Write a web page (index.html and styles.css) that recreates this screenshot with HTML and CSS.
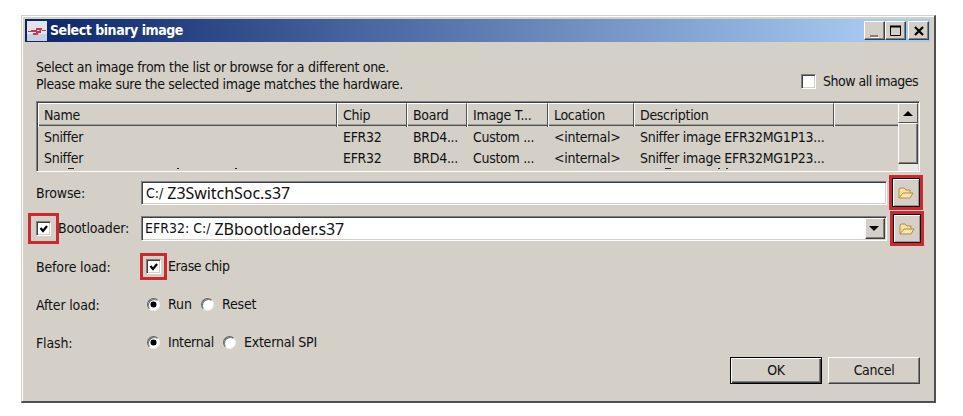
FILE: index.html
```
<!DOCTYPE html>
<html lang="en">
<head>
<meta charset="utf-8">
<title>Select binary image</title>
<link rel="stylesheet" href="styles.css">
</head>
<body>
<main class="window">
  <header class="titlebar">
    <svg class="app-icon" width="20" height="20" viewBox="0 0 20 20"><path d="M0 0h20v20H0z" fill="#e2e3ed"/><path d="M0 13h20v7H0z" fill="#c9cfe3"/><path d="M1 10.500h4M15 9.500h4" fill="none" stroke="#c23b4b"/><path d="M4 10h6M6 13h4l1-2M9 11h5M9 8h5l-1 2" fill="none" stroke="#c23b4b" stroke-width="1.800"/></svg>
    <h1>Select binary image</h1>
    <div class="controls">
      <button class="control"><svg width="20" height="18"><path d="M5 14h8" stroke="#808080" stroke-width="2"/><path d="M6 15.500h8" stroke="#fff"/></svg></button>
      <button class="control"><svg width="20" height="18"><path d="M4.500 4.500h10v9h-10z" fill="none" stroke="#000"/><path d="M4 4.500h11" stroke="#000" stroke-width="2"/></svg></button>
      <button class="control close"><svg width="20" height="18"><path d="M6 5l8 8M14 5l-8 8" stroke="#000" stroke-width="2.200"/></svg></button>
    </div>
  </header>
  <section class="intro">
    <p><span class="line1">Select an image from the list or browse for a different one.</span><br>Please make sure the selected image matches the hardware.</p>
    <label class="show-all"><i class="box"></i><span>Show all images</span></label>
  </section>
  <section class="table">
    <div class="grid">
      <div class="row head"><span>Name</span><span>Chip</span><span>Board</span><span>Image T...</span><span>Location</span><span>Description</span><span></span></div>
      <div class="row"><span>Sniffer</span><span>EFR32</span><span>BRD4...</span><span>Custom ...</span><span>&lt;internal&gt;</span><span>Sniffer image EFR32MG1P13...</span><span></span></div>
      <div class="row"><span>Sniffer</span><span>EFR32</span><span>BRD4...</span><span>Custom ...</span><span>&lt;internal&gt;</span><span>Sniffer image EFR32MG1P23...</span><span></span></div>
      <svg class="next-row" width="860" height="2"><path d="M30 .5h6M139 .5h2M197 .5h2M627 .5h6M680 .5h2M688 .5h2" stroke="#222"/></svg>
    </div>
    <div class="scroll"><div class="scroll-up"><svg width="18" height="18"><path d="M4 12h10L9 7z"/></svg></div><div class="thumb"></div></div>
  </section>
  <section class="form">
    <div class="line browse"><span class="label">Browse:</span><div class="field"><span class="prefix">C:/</span><span class="path">Z3SwitchSoc.s37</span></div><button class="folder"><svg width="18" height="16" viewBox="0 0 18 16"><path d="M2 13V4l1-1h4l2 2h4v3" fill="#f8dfa5" stroke="#b18a42"/><path d="M2 13l4-5h10l-3 5z" fill="#ffe5aa" stroke="#b18a42"/></svg></button></div>
    <div class="line boot"><span class="label"><i class="box checked"><svg width="11" height="11"><path d="M1.500 3l2.500 3 4-5" fill="none" stroke="#000" stroke-width="2.200"/></svg></i><span>Bootloader:</span></span><div class="field combo"><span class="prefix">EFR32: C:/</span><span class="path">ZBbootloader.s37</span><div class="drop"><svg width="16" height="18"><path d="M3 7h10l-5 5z"/></svg></div></div><button class="folder"><svg width="18" height="16" viewBox="0 0 18 16"><path d="M2 13V4l1-1h4l2 2h4v3" fill="#f8dfa5" stroke="#b18a42"/><path d="M2 13l4-5h10l-3 5z" fill="#ffe5aa" stroke="#b18a42"/></svg></button></div>
    <div class="line before"><span class="label">Before load:</span><i class="box checked"><svg width="11" height="11"><path d="M1.500 3l2.500 3 4-5" fill="none" stroke="#000" stroke-width="2.200"/></svg></i><span class="erase">Erase chip</span></div>
    <div class="line after"><span class="label">After load:</span><i class="radio on"></i><span class="run">Run</span><i class="radio"></i><span class="reset">Reset</span></div>
    <div class="line flash"><span class="label">Flash:</span><i class="radio on"></i><span class="internal">Internal</span><i class="radio"></i><span class="external">External SPI</span></div>
  </section>
  <footer><button class="action default">OK</button><button class="action">Cancel</button></footer>
</main>
</body>
</html>
```
FILE: styles.css
```
* { box-sizing: border-box; }
body { margin: 0; padding: 15px 0 0 21px; background: #fff; color: #111; font: 14px/17px "DejaVu Sans Condensed", "DejaVu Sans", sans-serif; font-stretch: condensed; letter-spacing: -0.33px; overflow: hidden; }
.window { width: 915px; height: 388px; padding: 2px 4px 0 2px; background: #d4d0c8; border: 1px solid #d4d0c8; border-right: 2px solid #505050; border-bottom: 2px solid #505050; box-shadow: inset 1px 1px #fff; }
button { padding: 0; color: inherit; font: inherit; letter-spacing: inherit; background: #d4d0c8; border: 1px solid; border-color: #fff #404040 #404040 #fff; box-shadow: inset -1px -1px #808080; }
svg { display: block; }
.titlebar { height: 23px; margin-top: 1px; display: flex; align-items: center; padding: 0 0 0 2px; margin-left: 1px; background: linear-gradient(90deg, #0a246a, #a6caf0 94%); }
.app-icon { margin-right: 3px; }
h1 { margin: 0; color: #fff; font-size: 14px; font-weight: bold; letter-spacing: -0.45px; }
.controls { display: flex; margin: 0 1px 1px auto; }
.control { width: 21px; height: 19px; }
.close { margin-left: 2px; }
.intro { height: 59px; display: flex; justify-content: space-between; padding: 17px 12px 0; }
.intro p { margin: 0; white-space: nowrap; }
.line1 { letter-spacing: -0.29px; }
.show-all { display: flex; align-items: center; gap: 7px; height: 17px; margin-top: 14px; letter-spacing: -0.5px; }
.box { width: 15px; height: 15px; flex: none; background: #fff; border: 1px solid; border-color: #808080 #fff #fff #808080; box-shadow: inset 1px 1px #404040, inset -1px -1px #d4d0c8; }
.checked { padding: 3px 0 0 2px; }
.table { width: 884px; height: 71px; margin-left: 12px; display: flex; border: 1px solid; border-color: #808080 #fff #fff #808080; box-shadow: inset 1px 1px #404040; padding: 1px 0 0 1px; }
.grid { width: 860px; overflow: hidden; }
.row { display: grid; grid-template-columns: 299px 70px 60px 81px 86px 200px 1fr; height: 21px; line-height: 21px; white-space: nowrap; letter-spacing: -0.3px; }
.row span { padding-left: 6px; }
.head { height: 23px; line-height: 23px; border-bottom: 1px solid #505050; box-shadow: inset 0 -1px #a0a09a; margin-bottom: 1px; }
.head span { border-left: 1px solid #fff; border-top: 1px solid #fff; border-right: 1px solid #505050; padding-left: 5px; }
.head span:last-child { border-right: 0; }
.next-row { margin-top: -1px; }
.scroll { width: 20px; background: #eae8e3; }
.scroll-up { height: 20px; border: 1px solid; border-color: #fff #505050 #505050 #fff; background: #d4d0c8; }
.thumb { height: 41px; background: #d4d0c8; border: 1px solid; border-color: #fff #404040 #404040 #fff; box-shadow: inset -1px -1px #808080; }
.form { padding-left: 12px; }
.line { display: flex; align-items: center; white-space: nowrap; }
.label { width: 105px; flex: none; letter-spacing: -0.15px; }
.browse { height: 38px; margin-top: 2px; }
.field { width: 746px; height: 24px; display: flex; align-items: center; padding-left: 4px; background: #fff; border: 1px solid; border-color: #808080 #fff #fff #808080; box-shadow: inset 1px 1px #404040, inset -1px -1px #d4d0c8; letter-spacing: 0; }
.path { font: 16px/20px "Noto Sans", sans-serif; letter-spacing: -0.05px; margin-left: 4px; }
.combo { height: 25px; padding-left: 3px; }
.drop { width: 20px; height: 21px; margin: 0 1px 0 auto; border: 1px solid; border-color: #fff #404040 #404040 #fff; box-shadow: inset -1px -1px #808080; background: #d4d0c8; }
.folder { width: 28px; height: 29px; margin-left: 5px; border: 1px solid #111; outline: 3px solid #cb2930; box-shadow: inset 1px 1px #fff, inset -1px -1px #999; display: flex; align-items: center; justify-content: center; }
.browse .folder { margin-top: -1px; }
.boot { height: 33px; }
.boot .folder { margin-left: 6px; }
.boot .label { display: flex; align-items: center; }
.boot .box { outline: 3px solid #cb2930; outline-offset: 5px; margin-right: 7px; }
.before { height: 38px; margin-top: 2px; }
.before .box { margin-left: 5px; outline: 3px solid #cb2930; outline-offset: 3px; }
.erase { margin-left: 7px; letter-spacing: -0.4px; }
.after, .flash { height: 38px; }
.before .label, .after .label, .flash .label { padding-top: 2px; }
.radio { width: 13px; height: 13px; flex: none; display: grid; place-items: center; border-radius: 50%; background: #fff; border: 1px solid; border-color: #606060 #eee #eee #606060; box-shadow: inset 1px 1px #777; }
.label + .radio { margin-left: 6px; }
.on::after { content: ""; width: 5px; height: 5px; background: #000; border-radius: 50%; box-shadow: 0 0 0 .5px #000; }
.radio + span { margin-left: 8px; }
.run { letter-spacing: 0; }
.run + .radio { margin-left: 9px; }
.internal + .radio { margin-left: 9px; }
.reset, .external { letter-spacing: -0.2px; }
footer { display: flex; gap: 6px; justify-content: flex-end; padding-right: 10px; margin-top: -4px; }
.action { width: 92px; height: 27px; }
.default { border-color: #000; box-shadow: inset 1px 1px #fff, inset -1px -1px #404040, inset -2px -2px #808080; }
```
